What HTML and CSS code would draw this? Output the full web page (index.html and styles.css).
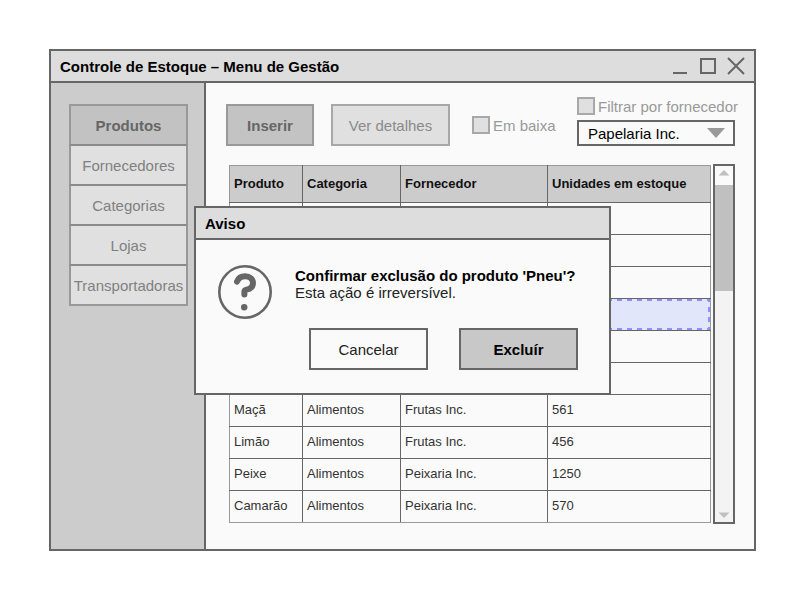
FILE: index.html
```html
<!DOCTYPE html>
<html lang="pt">
<head>
<meta charset="utf-8">
<meta name="viewport" content="width=device-width, initial-scale=1">
<title>Controle de Estoque</title>
<link rel="stylesheet" href="styles.css">
</head>
<body>
<div class="window">
  <header class="titlebar">
    <h1 class="title">Controle de Estoque – Menu de Gestão</h1>
    <div class="window-controls">
      <button class="window-control" type="button" aria-label="Minimizar"><svg width="18" height="18" viewBox="0 0 18 18"><path d="M2 16H16"/></svg></button>
      <button class="window-control" type="button" aria-label="Maximizar"><svg width="18" height="18" viewBox="0 0 18 18"><path d="M2 2H16V16H2Z"/></svg></button>
      <button class="window-control" type="button" aria-label="Fechar"><svg width="18" height="18" viewBox="0 0 18 18"><path d="M1 1L17 17M17 1L1 17"/></svg></button>
    </div>
  </header>
  <div class="content">
    <nav class="sidebar">
      <a class="menu-item menu-item-active" href="#">Produtos</a>
      <a class="menu-item" href="#">Fornecedores</a>
      <a class="menu-item" href="#">Categorias</a>
      <a class="menu-item" href="#">Lojas</a>
      <a class="menu-item" href="#">Transportadoras</a>
    </nav>
    <main class="main">
      <div class="toolbar">
        <button class="button button-insert" type="button">Inserir</button>
        <button class="button button-details" type="button">Ver detalhes</button>
        <label class="check"><input class="checkbox" type="checkbox">Em baixa</label>
        <div class="filter">
          <label class="check"><input class="checkbox" type="checkbox">Filtrar por fornecedor</label>
          <div class="select-wrap">
            <select class="select" aria-label="Fornecedor"><option>Papelaria Inc.</option></select>
          </div>
        </div>
      </div>
      <div class="listing">
        <table class="table">
          <colgroup><col class="col-product"><col class="col-category"><col class="col-supplier"><col></colgroup>
          <thead>
            <tr><th>Produto</th><th>Categoria</th><th>Fornecedor</th><th>Unidades em estoque</th></tr>
          </thead>
          <tbody>
            <tr><td></td><td></td><td></td><td></td></tr>
            <tr><td></td><td></td><td></td><td></td></tr>
            <tr><td></td><td></td><td></td><td></td></tr>
            <tr class="selected"><td></td><td></td><td></td><td></td></tr>
            <tr><td></td><td></td><td></td><td></td></tr>
            <tr><td></td><td></td><td></td><td></td></tr>
            <tr><td>Maçã</td><td>Alimentos</td><td>Frutas Inc.</td><td>561</td></tr>
            <tr><td>Limão</td><td>Alimentos</td><td>Frutas Inc.</td><td>456</td></tr>
            <tr><td>Peixe</td><td>Alimentos</td><td>Peixaria Inc.</td><td>1250</td></tr>
            <tr><td>Camarão</td><td>Alimentos</td><td>Peixaria Inc.</td><td>570</td></tr>
          </tbody>
        </table>
        <div class="scrollbar">
          <svg class="scroll-arrow" width="10" height="6" viewBox="0 0 10 6"><path d="M0 5L5 0L10 5Z" fill="#c0c0c0"/><path d="M0 5H10V6H0Z" fill="#dadada"/></svg>
          <div class="scroll-thumb"></div>
          <svg class="scroll-arrow scroll-arrow-down" width="10" height="6" viewBox="0 0 10 6"><path d="M0 1L5 6L10 1Z" fill="#c0c0c0"/><path d="M0 0H10V1H0Z" fill="#dadada"/></svg>
        </div>
      </div>
    </main>
  </div>
  <section class="dialog" role="alertdialog" aria-labelledby="dialog-title" aria-describedby="dialog-text">
    <header class="titlebar"><h2 class="title" id="dialog-title">Aviso</h2></header>
    <div class="dialog-body">
      <svg class="dialog-icon" width="54" height="54" viewBox="0 0 54 54" fill="none" stroke="#666">
        <circle cx="27" cy="27" r="25.7" stroke-width="2.6"/>
        <path d="M19 16.6C20.4 12.6 23.8 11.2 27.2 11.2C31.8 11.2 35 14.2 35 18C35 21.8 32.2 24 28.4 24.6C26.8 24.9 26.4 25.4 26.4 26.8V29.4" stroke-width="6" stroke-linecap="round" stroke-linejoin="round"/>
        <circle cx="26.2" cy="42.2" r="3.2" fill="#666" stroke="none"/>
      </svg>
      <div class="dialog-text" id="dialog-text">
        <strong>Confirmar exclusão do produto 'Pneu'?</strong>
        <p>Esta ação é irreversível.</p>
      </div>
      <div class="dialog-actions">
        <button class="button button-cancel" type="button">Cancelar</button>
        <button class="button button-delete" type="button">Excluír</button>
      </div>
    </div>
  </section>
</div>
</body>
</html>
```
FILE: styles.css
```css
* {
  box-sizing: border-box;
}

body {
  display: flex;
  min-height: 100vh;
  margin: 0;
  padding: 49px 44px 49px 49px;
  background: #fff;
  color: #000;
  font: 15px/17px "Liberation Sans", Arial, sans-serif;
}

button,
select {
  font: inherit;
}

.window {
  position: relative;
  display: flex;
  flex: 1;
  flex-direction: column;
  border: 2px solid #666;
  background: #fafafa;
}

.titlebar {
  display: flex;
  align-items: center;
  justify-content: space-between;
  height: 32px;
  padding: 0 9px;
  border-bottom: 2px solid #666;
  background: #ddd;
}

.title {
  margin: 0;
  font-size: 15px;
}

.window-controls {
  display: flex;
  gap: 10px;
}

.window-control {
  display: block;
  height: 18px;
  padding: 0;
  border: 0;
  background: none;
}

.window-control svg {
  display: block;
  fill: none;
  stroke: #666;
  stroke-width: 2;
}

.content {
  display: flex;
  flex: 1;
}

.sidebar {
  flex: none;
  width: 155px;
  padding: 21px 16px 0 18px;
  border-right: 2px solid #666;
  background: #ccc;
}

.menu-item {
  display: flex;
  align-items: center;
  justify-content: center;
  height: 42px;
  border: 2px solid #999;
  background: #e0e0e0;
  color: #808080;
  text-decoration: none;
}

.menu-item + .menu-item {
  margin-top: -2px;
  border-top-color: #8a8a8a;
}

.menu-item-active {
  background: #c2c2c2;
  color: #666;
  font-weight: bold;
}

.main {
  flex: 1;
  padding: 14px 19px 23px 20px;
}

.toolbar {
  display: flex;
  align-items: flex-end;
}

.button {
  height: 42px;
  padding: 0;
  border: 2px solid #666;
}

.button-insert {
  width: 88px;
  margin-right: 17px;
  border-color: #999;
  background: #c3c3c3;
  color: #666;
  font-weight: bold;
}

.button-details {
  width: 119px;
  margin-right: 22px;
  border-color: #a8a8a8;
  background: #e0e0e0;
  color: #8a8a8a;
}

.check {
  display: flex;
  align-items: center;
  gap: 3px;
  color: #999;
  white-space: nowrap;
}

.toolbar > .check {
  height: 42px;
}

.checkbox {
  appearance: none;
  flex: none;
  width: 18px;
  height: 18px;
  margin: 0;
  border: 2px solid #a8a8a8;
  background: #e0e0e0;
}

.filter {
  width: 158px;
  margin-left: auto;
}

.select-wrap {
  position: relative;
  margin-top: 5px;
}

.select-wrap::after {
  content: "";
  position: absolute;
  top: 8px;
  right: 10px;
  border: 9px solid transparent;
  border-top: 10px solid #999;
  border-bottom: 0;
  pointer-events: none;
}

.select {
  appearance: none;
  display: block;
  width: 100%;
  height: 26px;
  padding: 0 9px;
  border: 2px solid #666;
  border-radius: 0;
  background: #fafafa;
  color: #000;
}

.listing {
  display: flex;
  align-items: stretch;
  gap: 2px;
  margin-top: 18px;
  padding-left: 3px;
}

.table {
  flex: 1;
  margin: 1px 0;
  border: 1px solid #999;
  border-collapse: collapse;
  table-layout: fixed;
  color: #333;
  font-size: 13px;
  line-height: 15px;
}

.col-product {
  width: 73px;
}

.col-category {
  width: 98px;
}

.col-supplier {
  width: 147px;
}

th,
td {
  height: 32px;
  padding: 0 4px 2px;
  border: 1px solid #666;
  text-align: left;
}

th {
  height: 37px;
  border-top-color: #999;
  background: #ccc;
  color: #111;
}

th:first-child,
td:first-child {
  border-left-color: #999;
}

th:last-child,
td:last-child {
  border-right-color: #999;
}

tr:last-child td {
  border-bottom-color: #999;
}

.selected td {
  position: relative;
  background: #e1e6fa;
}

/* Dashed marquee inside the grid lines: 5px dashes, 5px gaps. */
.selected td::after {
  content: "";
  position: absolute;
  inset: 0;
  background:
    linear-gradient(90deg, #8f8fff 50%, transparent 50%) 9px 0 / 10px 2px repeat-x,
    linear-gradient(90deg, #8f8fff 50%, transparent 50%) 9px 100% / 10px 2px repeat-x;
}

.selected td:last-child::after {
  background:
    linear-gradient(90deg, #8f8fff 50%, transparent 50%) 9px 0 / 10px 2px repeat-x,
    linear-gradient(90deg, #8f8fff 50%, transparent 50%) 9px 100% / 10px 2px repeat-x,
    linear-gradient(#8f8fff 50%, transparent 50%) 100% 8px / 2px 10px repeat-y;
}

.scrollbar {
  display: flex;
  flex-direction: column;
  align-items: center;
  width: 22px;
  padding: 4px 0;
  border: 2px solid #666;
  background: linear-gradient(#fafafa 19px, #f3f3f3 19px);
}

.scroll-arrow {
  display: block;
  flex: none;
}

.scroll-thumb {
  width: 100%;
  height: 106px;
  margin-top: 9px;
  background: #c0c0c0;
}

.scroll-arrow-down {
  margin-top: auto;
}

.dialog {
  position: absolute;
  top: 155px;
  right: 0;
  left: 0;
  width: 417px;
  margin: 0 auto;
  border: 2px solid #666;
  background: #fafafa;
}

.dialog-body {
  display: grid;
  grid-template-columns: 54px 1fr;
  column-gap: 23px;
  padding: 25px 31px 23px 22px;
}

.dialog-text {
  padding-top: 2px;
}

.dialog-text strong {
  display: block;
}

.dialog-text p {
  margin: 0;
  color: #222;
}

.dialog-actions {
  display: flex;
  grid-column: 1 / -1;
  justify-content: flex-end;
  gap: 31px;
  margin-top: 9px;
}

.button-cancel,
.button-delete {
  width: 119px;
  background: #fafafa;
  color: #222;
}

.button-delete {
  background: #c8c8c8;
  color: #000;
  font-weight: bold;
}
```
